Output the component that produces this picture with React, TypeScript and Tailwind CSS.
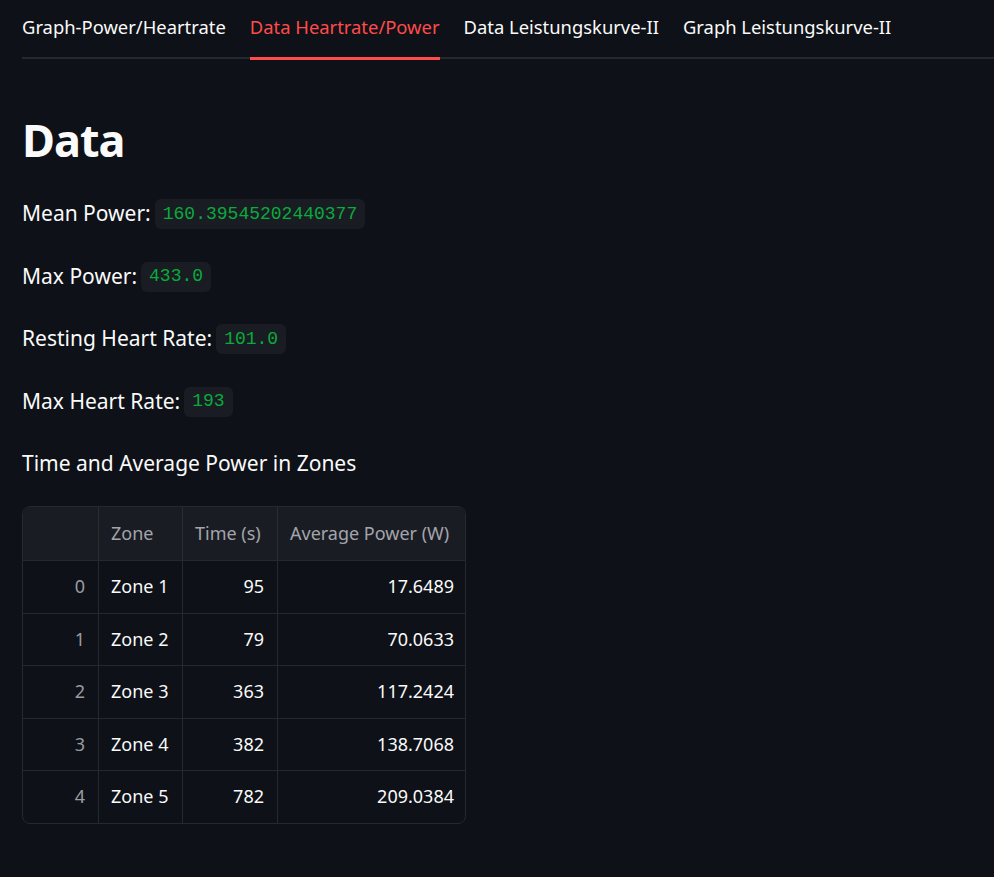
import React from "react";

const tabs = [
  "Graph-Power/Heartrate",
  "Data Heartrate/Power",
  "Data Leistungskurve-II",
  "Graph Leistungskurve-II",
];

const rows = [
  ["0", "Zone 1", "95", "17.6489"],
  ["1", "Zone 2", "79", "70.0633"],
  ["2", "Zone 3", "363", "117.2424"],
  ["3", "Zone 4", "382", "138.7068"],
  ["4", "Zone 5", "782", "209.0384"],
];

function Code({ children }: { children: React.ReactNode }) {
  return (
    <code className="ml-[4px] h-[30px] px-[8px] rounded-md bg-[#1a1c24] text-[#09ab3b] text-[18px] flex items-center font-['Liberation_Mono',monospace]">
      {children}
    </code>
  );
}

function Line({ label, value }: { label: string; value?: string }) {
  return (
    <div className="flex items-center h-[30px] text-[21px] text-[#fafafa]">
      <span>{label}</span>
      {value !== undefined && <Code>{value}</Code>}
    </div>
  );
}

export default function App() {
  return (
    <div className="min-h-[877px] bg-[#0e1117] pl-[22px] font-['Noto_Sans',sans-serif] text-[#fafafa]">
      <div className="flex gap-[24px] border-b-2 border-[#26282f]">
        {tabs.map((t, i) => (
          <div
            key={t}
            className={
              "relative h-[57px] pb-[3px] flex items-center text-[18.4px] " +
              (i === 1 ? "text-[#ff4b4b]" : "text-[#fafafa]")
            }
          >
            {t}
            {i === 1 && (
              <span className="absolute left-0 right-0 bottom-[-3px] h-[3px] bg-[#ff4b4b]" />
            )}
          </div>
        ))}
      </div>

      <h1 className="mt-[58px] text-[45px] leading-[45px] font-bold tracking-[-1px]">Data</h1>

      <div className="mt-[37px] flex flex-col gap-[32.5px]">
        <Line label="Mean Power:" value="160.39545202440377" />
        <Line label="Max Power:" value="433.0" />
        <Line label="Resting Heart Rate:" value="101.0" />
        <Line label="Max Heart Rate:" value="193" />
        <Line label="Time and Average Power in Zones" />
      </div>

      <div className="mt-[27px] w-[444px] rounded-lg border border-[#26282f] overflow-hidden text-[18px]">
        <div className="grid grid-cols-[76px_84px_95px_189px] h-[53px] bg-[#1a1c24] text-[#a3a5ab]">
          <div className="border-r border-[#2b2d35]" />
          <div className="border-r border-[#2b2d35] flex items-center px-[12px]">Zone</div>
          <div className="border-r border-[#2b2d35] flex items-center px-[12px]">Time (s)</div>
          <div className="flex items-center px-[12px]">Average Power (W)</div>
        </div>
        {rows.map((r) => (
          <div
            key={r[0]}
            className="grid grid-cols-[76px_84px_95px_189px] h-[52.5px] border-t border-[#26282f]"
          >
            <div className="border-r border-[#26282f] flex items-center justify-end px-[13px] text-[#9a9ca2]">
              {r[0]}
            </div>
            <div className="border-r border-[#26282f] flex items-center px-[12px]">{r[1]}</div>
            <div className="border-r border-[#26282f] flex items-center justify-end px-[13px]">{r[2]}</div>
            <div className="flex items-center justify-end px-[13px]">{r[3]}</div>
          </div>
        ))}
      </div>
    </div>
  );
}
